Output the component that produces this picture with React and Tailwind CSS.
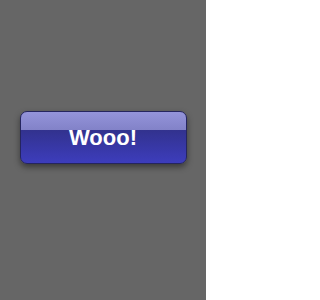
export default function App() {
  return (
    <div className="w-[206px] h-[300px] bg-[#666666] flex justify-center pt-[111px] font-['Liberation_Sans',Arial,sans-serif]">
      <button className="w-[167px] h-[53px] rounded-[7px] border border-[#25255f] flex items-center justify-center pt-[1px] text-white font-bold text-[22px] leading-none bg-[linear-gradient(to_bottom,#9494da_0px,#8282c8_18px,#32328e_18px,#3d3dbc_100%)] shadow-[0_3px_6px_rgba(0,0,0,0.45)]">
        Wooo!
      </button>
    </div>
  );
}
